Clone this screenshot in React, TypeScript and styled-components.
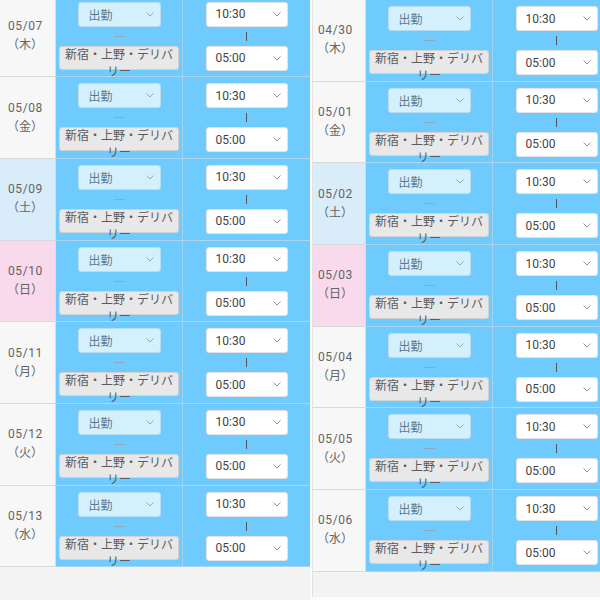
import React from 'react';
import styled, { createGlobalStyle } from 'styled-components';

const GlobalStyle = createGlobalStyle`
  html, body {
    margin: 0;
    padding: 0;
    background: #fbfbfb;
    font-family: Roboto, "Noto Sans CJK JP", sans-serif;
  }
`;

const Page = styled.div`
  display: flex;
  gap: 2px;
  width: 600px;
  height: 600px;
  overflow: hidden;
`;

const Panel = styled.div<{ $width?: number }>`
  flex: ${(p) => (p.$width ? `0 0 ${p.$width}px` : '1 1 auto')};
  height: ${(p) => (p.$width ? '600px' : '597px')};
  overflow: hidden;
  background: #f3f3f3;
  border-left: ${(p) => (p.$width ? 'none' : '1px solid #e2e2e2')};
`;

const Table = styled.div<{ $shift: number }>`
  margin-top: ${(p) => p.$shift}px;
  width: max-content;
`;

const Row = styled.div<{ $dateW: number }>`
  display: grid;
  grid-template-columns: ${(p) => p.$dateW}px 127px 127px;
  height: 80.7px;
  border-bottom: 1px solid #d9d9d9;
`;

const DateCell = styled.div<{ $kind: 'wd' | 'sat' | 'sun'; $pad: number }>`
  display: flex;
  flex-direction: column;
  justify-content: center;
  padding-left: ${(p) => p.$pad}px;
  background: ${(p) => (p.$kind === 'sat' ? '#d8ecf9' : p.$kind === 'sun' ? '#f9d9ec' : '#f7f7f7')};
  border-right: 1px solid #dcdcdc;
  color: #636363;
  font-size: 12px;
  line-height: 19px;
  letter-spacing: 0.6px;
`;

const Weekday = styled.span`
  letter-spacing: 0;
  margin-left: -1px;
`;

const BlueCell = styled.div<{ $last?: boolean }>`
  display: flex;
  flex-direction: column;
  align-items: center;
  padding-top: 6px;
  background: #6fcbfd;
  border-right: ${(p) => (p.$last ? 'none' : '1px solid #9fd3ee')};
  box-shadow: 0 1px 0 #a9d6ee;
`;

const Select = styled.div<{ $tone: 'status' | 'time' }>`
  box-sizing: border-box;
  display: flex;
  align-items: center;
  justify-content: space-between;
  width: ${(p) => (p.$tone === 'status' ? 83 : 82)}px;
  height: 25px;
  padding: 0 6px 0 ${(p) => (p.$tone === 'status' ? 10 : 9)}px;
  border-radius: 3px;
  border: 1px solid ${(p) => (p.$tone === 'status' ? '#b5def3' : '#e3e3e3')};
  background: ${(p) => (p.$tone === 'status' ? '#d4f0fd' : '#ffffff')};
  color: ${(p) => (p.$tone === 'status' ? '#5c7b8c' : '#444')};
  font-size: 12px;
`;

const Chevron = styled.svg`
  width: 8px;
  height: 5px;
  flex: none;
`;

const Dash = styled.div`
  width: 11px;
  height: 1px;
  margin: 9px 0 9px;
  background: #8fa9b8;
`;

const Bar = styled.div`
  width: 1px;
  height: 9px;
  margin: 5px 0 5px;
  background: #555;
`;

const AreaButton = styled.button`
  box-sizing: border-box;
  width: 120px;
  height: 24px;
  padding: 0 2px;
  border: 1px solid #d2d2d2;
  border-radius: 3px;
  background: #e8e8e8;
  color: #5a5a5a;
  font-family: Roboto, "Noto Sans CJK JP", sans-serif;
  font-size: 12px;
  line-height: 17px;
  overflow: visible;
`;

type Day = { date: string; wd: string; kind: 'wd' | 'sat' | 'sun' };

const leftDays: Day[] = [
  { date: '05/07', wd: '木', kind: 'wd' },
  { date: '05/08', wd: '金', kind: 'wd' },
  { date: '05/09', wd: '土', kind: 'sat' },
  { date: '05/10', wd: '日', kind: 'sun' },
  { date: '05/11', wd: '月', kind: 'wd' },
  { date: '05/12', wd: '火', kind: 'wd' },
  { date: '05/13', wd: '水', kind: 'wd' },
];

const rightDays: Day[] = [
  { date: '04/30', wd: '木', kind: 'wd' },
  { date: '05/01', wd: '金', kind: 'wd' },
  { date: '05/02', wd: '土', kind: 'sat' },
  { date: '05/03', wd: '日', kind: 'sun' },
  { date: '05/04', wd: '月', kind: 'wd' },
  { date: '05/05', wd: '火', kind: 'wd' },
  { date: '05/06', wd: '水', kind: 'wd' },
];

function Down({ color }: { color: string }) {
  return (
    <Chevron viewBox="0 0 8 5">
      <polyline points="0.5,0.5 4,4 7.5,0.5" fill="none" stroke={color} strokeWidth="0.9" />
    </Chevron>
  );
}

function ShiftRow({ day, dateW, pad }: { day: Day; dateW: number; pad: number }) {
  return (
    <Row $dateW={dateW}>
      <DateCell $kind={day.kind} $pad={pad}>
        <span>{day.date}</span>
        <Weekday>（{day.wd}）</Weekday>
      </DateCell>
      <BlueCell>
        <Select $tone="status">
          出勤
          <Down color="#8fa3ae" />
        </Select>
        <Dash />
        <AreaButton>新宿・上野・デリバリー</AreaButton>
      </BlueCell>
      <BlueCell $last>
        <Select $tone="time">
          10:30
          <Down color="#888" />
        </Select>
        <Bar />
        <Select $tone="time">
          05:00
          <Down color="#888" />
        </Select>
      </BlueCell>
    </Row>
  );
}

export default function App() {
  return (
    <>
      <GlobalStyle />
      <Page>
        <Panel $width={310}>
          <Table $shift={-4.5}>
            {leftDays.map((d) => (
              <ShiftRow key={d.date} day={d} dateW={56} pad={8} />
            ))}
          </Table>
        </Panel>
        <Panel>
          <Table $shift={0}>
            {rightDays.map((d) => (
              <ShiftRow key={d.date} day={d} dateW={53} pad={5} />
            ))}
          </Table>
        </Panel>
      </Page>
    </>
  );
}
